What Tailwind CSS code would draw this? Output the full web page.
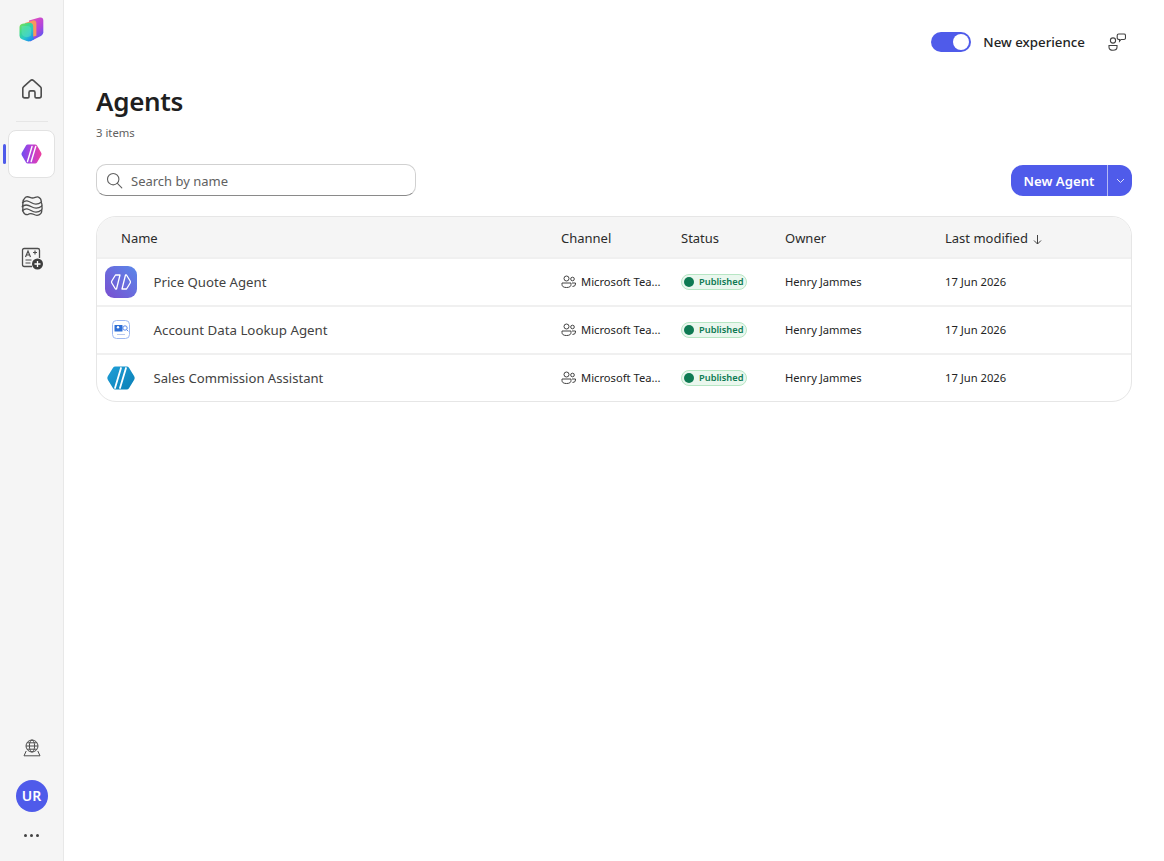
<!DOCTYPE html>
<html lang="en">
<head>
<meta charset="utf-8">
<title>Agents</title>
<script src="https://cdn.jsdelivr.net/npm/@tailwindcss/browser@4"></script>
</head>
<body class="bg-white font-['Noto_Sans','Open_Sans',sans-serif] text-[#242424]">
<div class="flex h-[861px] w-[1164px] overflow-hidden">

    <!-- Left rail -->
    <aside class="flex w-[64px] shrink-0 flex-col items-center border-r border-[#e8e8e8] bg-[#f5f5f5]">
        <svg class="mt-[17px] h-[25px] w-[25px]" viewBox="0 0 25 25">
            <defs>
                <linearGradient id="logoBack" x1="0" y1="0" x2="0.6" y2="1"><stop offset="0" stop-color="#f052b4"/><stop offset=".65" stop-color="#b044dc"/><stop offset="1" stop-color="#5a58f0"/></linearGradient>
                <linearGradient id="logoFront" x1="0" y1="0" x2="0.8" y2="1"><stop offset="0" stop-color="#8adf4e"/><stop offset=".35" stop-color="#3fd98c"/><stop offset=".65" stop-color="#28c8c8"/><stop offset="1" stop-color="#1a86f2"/></linearGradient>
            </defs>
            <path d="M10 3.500 20.500.6q3.800-.8 3.800 2.900v11.800q0 2.300-2 3.400L11 24.500z" fill="url(#logoBack)"/>
            <path d="M6 6l8-2.600q3-.6 3.400 2.400v13L9 21z" fill="#f7985e"/>
            <path d="M.5 10.200q0-3 3-3.500l6.500-1q4-.3 4.200 3.600v9.700q0 2.400 1 3.300l-3.500 1.700q-2 .8-4 0L3 22.300q-2.500-1-2.500-3.500z" fill="url(#logoFront)"/>
            <path d="M2.500 9h6q3.500 0 3.500 3.500v6q-3 2.500-6.500 1.200Q2.500 18.500 2.500 15z" fill="#5fe2bd" opacity=".5"/>
        </svg>
        <svg class="mt-[35px] h-[24px] w-[24px]" viewBox="0 0 24 24" fill="none" stroke="#4d4d4d" stroke-width="1.600" stroke-linejoin="round">
            <path d="M3.500 9.800 10.400 3.600q1.600-1.300 3.200 0l6.900 6.200q.7.600.7 1.600V19q0 1.900-1.900 1.900h-3.100q-1.200 0-1.200-1.200v-4.200q0-1.600-1.600-1.600h-2.800q-1.600 0-1.600 1.600v4.200q0 1.200-1.200 1.200H4.700Q2.800 20.900 2.800 19v-7.600q0-1 .7-1.600z"/>
        </svg>
        <div class="mt-[20px] h-px w-[32px] bg-[#e6e6e6]"></div>
        <div class="relative mt-[8px] flex w-full justify-center">
            <div class="absolute left-[3px] top-[14px] h-[20px] w-[3px] rounded-full bg-[#4f5bea]"></div>
            <div class="flex h-[48px] w-[47px] items-center justify-center rounded-[8px] border border-[#e2e2e2] bg-white">
                <svg class="h-[20px] w-[21px]" viewBox="0 0 21 20">
                    <defs><linearGradient id="navAgent" x1="0" y1="0" x2="1" y2="0"><stop offset="0" stop-color="#6d4ff0"/><stop offset=".5" stop-color="#b93fd8"/><stop offset="1" stop-color="#ee3f9c"/></linearGradient></defs>
                    <path d="M.8 8.800 5 1.500Q5.600.5 6.800.5h7.400q1.200 0 1.800 1l4.200 7.300q.7 1.200 0 2.400L16 18.500q-.6 1-1.800 1H6.800q-1.200 0-1.800-1L.8 11.200q-.7-1.200 0-2.400z" fill="url(#navAgent)"/>
                    <path d="M6.500 17.500 11 2.500M10.200 17.500 14.700 2.500" stroke="#fff" stroke-width="1.400" stroke-linecap="round"/>
                </svg>
            </div>
        </div>
        <svg class="mt-[17px] h-[22px] w-[22px]" viewBox="0 0 22 22" fill="none" stroke="#4d4d4d" stroke-width="1.300" stroke-linecap="round" stroke-linejoin="round">
            <path d="M4.500 2.200c3-1.600 4.500.8 7 .8s4-2 6-.9q3.200 1.600 2.700 5.400q1.200 1.800.5 3.700q.8 2 0 3.700q.5 3.600-2.700 5q-2.500 1.100-5.500-.6t-6 .4q-3 .2-4.300-3q-.9-1.700-.2-3.700q-.9-2 0-3.900q-.7-4 2.500-6.900z"/>
            <path d="M1.500 7.800c3-3.400 6-1.800 9 0s6 2.300 10-.8M1.200 11.800c3-3.400 6.300-1.800 9.300 0s6.300 2.300 10.500-.8M1.500 15.800c3-3.400 6-1.800 9 0s6 2.300 10-.8"/>
        </svg>
        <svg class="mt-[30px] h-[23px] w-[22px]" viewBox="0 0 22 23" fill="none" stroke="#4d4d4d" stroke-width="1.300">
            <path d="M11 19.500H3.200q-1.700 0-1.700-1.700V3.200q0-1.700 1.700-1.700h13.600q1.700 0 1.700 1.700V11"/>
            <path d="M4.500 10 7 4l2.500 6M5.300 8h3.400M12 5.500h4M14 3.500v4M4.500 13h6M4.500 16h5" stroke-width="1.200"/>
            <circle cx="16.500" cy="17" r="5.500" fill="#3d3d3d" stroke="none"/>
            <path d="M16.500 14v6M13.500 17h6" stroke="#fff" stroke-width="1.300"/>
        </svg>

        <svg class="mt-auto h-[18px] w-[18px]" viewBox="0 0 18 18" fill="none" stroke="#4d4d4d" stroke-width="1">
            <circle cx="9" cy="7" r="6"/>
            <ellipse cx="9" cy="7" rx="2.600" ry="6"/>
            <path d="M3 7h12M4 3.800h10M4 10.200h10M3.200 12 1 16.800h16L14.800 12"/>
        </svg>
        <div class="mt-[23px] flex h-[32px] w-[32px] items-center justify-center rounded-full bg-[#4f5bea] text-sm font-semibold text-white">UR</div>
        <div class="mb-[24px] mt-[22px] flex gap-[3px]">
            <span class="h-[3px] w-[3px] rounded-full bg-[#424242]"></span>
            <span class="h-[3px] w-[3px] rounded-full bg-[#424242]"></span>
            <span class="h-[3px] w-[3px] rounded-full bg-[#424242]"></span>
        </div>
    </aside>

    <!-- Main -->
    <main class="min-w-0 flex-1 pl-[32px] pr-[32px]">
        <div class="flex h-[52px] items-end justify-end pr-[6px]">
            <div class="flex items-center">
                <div class="flex h-[20px] w-[40px] items-center justify-end rounded-full bg-[#4f5bea] pr-[2px]">
                    <div class="h-[16px] w-[16px] rounded-full bg-white"></div>
                </div>
                <span class="ml-[12px] text-[13.300px] font-medium leading-[20px]">New experience</span>
                <svg class="ml-[23px] h-[18px] w-[18px]" viewBox="0 0 18 18" fill="none" stroke="#424242" stroke-width="1.100">
                    <circle cx="5" cy="7.500" r="2.600"/>
                    <path d="M1 12.500h8v1.800q0 3-4 3t-4-3z"/>
                    <path d="M9.200 2.500q0-1.500 1.500-1.500h5.300q1.500 0 1.500 1.500v2.500q0 1.500-1.500 1.500h-3l-1.500 1.800V6.500q-2.300 0-2.300-1.500z"/>
                </svg>
            </div>
        </div>

        <h1 class="mt-[31px] text-[26px] font-semibold leading-[36px] tracking-[-0.3px] text-[#1f1f1f]">Agents</h1>
        <p class="mt-[6px] text-[11.300px] leading-[16px] text-[#616161]">3 items</p>

        <div class="mt-[23px] flex items-center justify-between">
            <div class="flex h-[32px] w-[320px] items-center rounded-[10px] border border-[#d1d1d1] border-b-[#8a8a8a] pl-[9px]">
                <svg class="h-[17px] w-[17px]" viewBox="0 0 17 17" fill="none" stroke="#616161" stroke-width="1.100" stroke-linecap="round">
                    <circle cx="7.200" cy="7.200" r="5.700"/>
                    <path d="M11.400 11.400 15.800 15.800"/>
                </svg>
                <span class="ml-[8px] pt-[1px] text-[13px] leading-[20px] text-[#616161]">Search by name</span>
            </div>
            <div class="flex h-[31px] w-[121px] items-center rounded-[12px] bg-[#4f5bea] text-white">
                <span class="flex h-full w-[97px] items-center justify-center border-r border-[#b5baf5] pt-[3px] text-[13.200px] font-semibold">New Agent</span>
                <svg class="ml-[8px] h-[9px] w-[9px]" viewBox="0 0 9 9" fill="none" stroke="#dfe1fb" stroke-width="1"><path d="M1 3l3.500 3.500L8 3"/></svg>
            </div>
        </div>

        <!-- Table -->
        <div class="mt-[20px] overflow-hidden rounded-[20px] border border-[#e6e6e6] text-[11.200px]">
            <div class="grid h-[40px] grid-cols-[464px_120px_104px_160px_1fr] items-center bg-[#f5f5f5] pt-[4px] text-[13px] text-[#2b2b2b]">
                <span class="pl-[24px]">Name</span>
                <span>Channel</span>
                <span>Status</span>
                <span>Owner</span>
                <span class="flex items-center gap-[4px]">Last modified
                    <svg class="h-[11px] w-[11px]" viewBox="0 0 11 11" fill="none" stroke="#424242" stroke-width="1"><path d="M5.500 1v9M2 6.500l3.500 3.500L9 6.500"/></svg>
                </span>
            </div>

            <div class="grid h-[48px] grid-cols-[464px_120px_104px_160px_1fr] items-center border-t-2 border-[#f0f0f0] pt-[2px]">
                <div class="flex items-center pl-[8px]">
                    <svg class="-mt-[2px] h-[32px] w-[32px]" viewBox="0 0 32 32">
                        <defs><linearGradient id="quote" x1="1" y1="0" x2="0" y2="1"><stop offset="0" stop-color="#5a88ea"/><stop offset="1" stop-color="#7a4fd0"/></linearGradient></defs>
                        <rect width="32" height="32" rx="9" fill="url(#quote)"/>
                        <path d="M10.500 9H15L11.500 23H10.500L6.800 17q-.6-1 0-2zM21.500 23H17L20.500 9H21.500L25.200 15q.6 1 0 2z" fill="none" stroke="#fff" stroke-width="1.300" stroke-linejoin="round"/>
                    </svg>
                    <span class="ml-[16.500px] text-[13.200px] text-[#424242]">Price Quote Agent</span>
                </div>
                <div class="-mt-[2px] flex items-center gap-[5px]">
                    <svg class="h-[15px] w-[15px] shrink-0" viewBox="0 0 15 15" fill="none" stroke="#424242" stroke-width="1"><circle cx="5.500" cy="4.500" r="2.500"/><circle cx="11.500" cy="5" r="1.800"/><path d="M1 9h9v1.500q0 3-4.500 3T1 10.500zM11 9h3.500v1q0 2.500-3 2.500"/></svg>
                    <span>Microsoft Tea...</span>
                </div>
                <div><span class="inline-flex h-[16px] w-[66px] items-center rounded-full border border-[#b7e6c4] bg-[#eaf7ee] pl-[2px] text-[9.300px] font-semibold text-[#0e7a53]"><span class="mr-[5px] h-[10px] w-[10px] rounded-full bg-[#0e7a53]"></span>Published</span></div>
                <span class="-mt-[2px]">Henry Jammes</span>
                <span class="-mt-[2px]">17 Jun 2026</span>
            </div>

            <div class="grid h-[48px] grid-cols-[464px_120px_104px_160px_1fr] items-center border-t-2 border-[#f0f0f0] pt-[2px]">
                <div class="flex items-center pl-[8px]">
                    <svg class="-mt-[2px] h-[32px] w-[32px]" viewBox="0 0 32 32">
                        <rect x="7.500" y="6.500" width="17" height="18" rx="4" fill="#fff" stroke="#9db8f2" stroke-width="1"/>
                        <rect x="9.500" y="11" width="8" height="6.500" rx=".5" fill="#2f6fd6"/>
                        <circle cx="13" cy="13.300" r="1.200" fill="#fff"/>
                        <circle cx="20" cy="14" r="2.200" fill="none" stroke="#5a88ea" stroke-width="1"/>
                        <path d="M21.600 15.600 23.300 17.300" stroke="#5a88ea" stroke-width="1"/>
                        <path d="M12 20.500h8" stroke="#b9c9ee" stroke-width="1"/>
                    </svg>
                    <span class="ml-[16.500px] text-[13.300px] text-[#424242]">Account Data Lookup Agent</span>
                </div>
                <div class="-mt-[2px] flex items-center gap-[5px]">
                    <svg class="h-[15px] w-[15px] shrink-0" viewBox="0 0 15 15" fill="none" stroke="#424242" stroke-width="1"><circle cx="5.500" cy="4.500" r="2.500"/><circle cx="11.500" cy="5" r="1.800"/><path d="M1 9h9v1.500q0 3-4.500 3T1 10.500zM11 9h3.500v1q0 2.500-3 2.500"/></svg>
                    <span>Microsoft Tea...</span>
                </div>
                <div><span class="inline-flex h-[16px] w-[66px] items-center rounded-full border border-[#b7e6c4] bg-[#eaf7ee] pl-[2px] text-[9.300px] font-semibold text-[#0e7a53]"><span class="mr-[5px] h-[10px] w-[10px] rounded-full bg-[#0e7a53]"></span>Published</span></div>
                <span class="-mt-[2px]">Henry Jammes</span>
                <span class="-mt-[2px]">17 Jun 2026</span>
            </div>

            <div class="grid h-[48px] grid-cols-[464px_120px_104px_160px_1fr] items-center border-t-2 border-[#f0f0f0] pt-[2px]">
                <div class="flex items-center pl-[8px]">
                    <svg class="-mt-[2px] h-[32px] w-[32px]" viewBox="0 0 32 32">
                        <defs><linearGradient id="sales" x1="0" y1="0" x2="1" y2="1"><stop offset="0" stop-color="#1f9fd8"/><stop offset="1" stop-color="#0b7fb5"/></linearGradient></defs>
                        <path d="M2.800 14.200 8 5.800Q8.800 4.500 10.300 4.500h11.400q1.500 0 2.300 1.300l5.200 8.400q1.100 1.800 0 3.600L24 26.200q-.8 1.300-2.300 1.300H10.300q-1.500 0-2.300-1.300l-5.200-8.400q-1.100-1.800 0-3.600z" fill="url(#sales)"/>
                        <path d="M10 26 16 6M15 26 21 6" stroke="#fff" stroke-width="1.800" stroke-linecap="round"/>
                    </svg>
                    <span class="ml-[16.500px] text-[13.100px] text-[#424242]">Sales Commission Assistant</span>
                </div>
                <div class="-mt-[2px] flex items-center gap-[5px]">
                    <svg class="h-[15px] w-[15px] shrink-0" viewBox="0 0 15 15" fill="none" stroke="#424242" stroke-width="1"><circle cx="5.500" cy="4.500" r="2.500"/><circle cx="11.500" cy="5" r="1.800"/><path d="M1 9h9v1.500q0 3-4.500 3T1 10.500zM11 9h3.500v1q0 2.500-3 2.500"/></svg>
                    <span>Microsoft Tea...</span>
                </div>
                <div><span class="inline-flex h-[16px] w-[66px] items-center rounded-full border border-[#b7e6c4] bg-[#eaf7ee] pl-[2px] text-[9.300px] font-semibold text-[#0e7a53]"><span class="mr-[5px] h-[10px] w-[10px] rounded-full bg-[#0e7a53]"></span>Published</span></div>
                <span class="-mt-[2px]">Henry Jammes</span>
                <span class="-mt-[2px]">17 Jun 2026</span>
            </div>
        </div>
    </main>
</div>
</body>
</html>
